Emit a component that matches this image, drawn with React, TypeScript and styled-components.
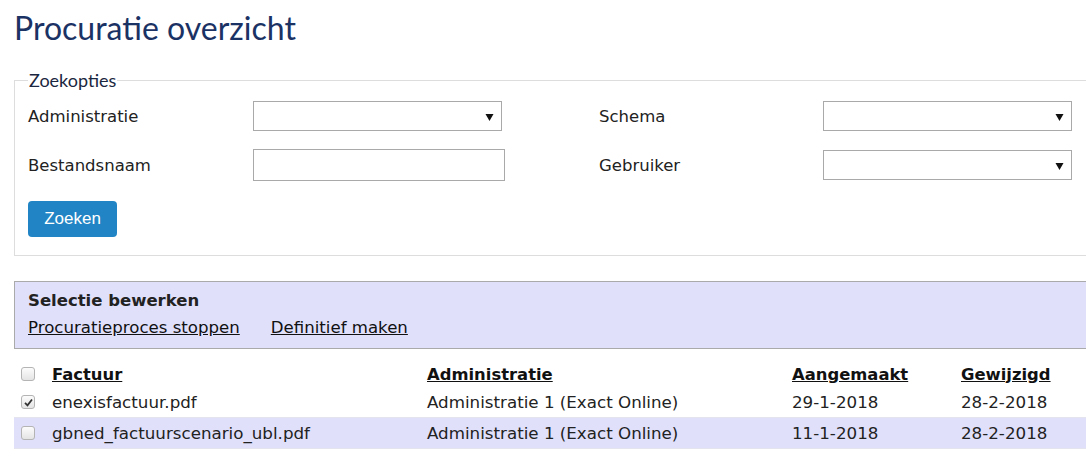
import React from "react";
import styled, { createGlobalStyle } from "styled-components";

const GlobalStyle = createGlobalStyle`
  html, body {
    margin: 0;
    padding: 0;
    background: #fff;
  }
  body {
    font-family: "DejaVu Sans", Verdana, sans-serif;
    color: #222;
  }
`;

const Page = styled.div`
  padding: 0 0 0 14px;
  width: 1100px;
`;

const Title = styled.h1`
  margin: 0;
  padding-top: 9px;
  height: 60px;
  font-family: "Lato", "Open Sans", sans-serif;
  font-weight: 400;
  font-size: 32px;
  line-height: 38px;
  color: #1b3264;
`;

const Fieldset = styled.fieldset`
  margin: 0;
  padding: 4px 12px 18px 13px;
  border: 1px solid #ddd;
  border-right: none;
`;

const Legend = styled.legend`
  padding: 0 1px;
  font-family: "Lato", "Open Sans", sans-serif;
  font-size: 18px;
  color: #1b2740;
`;

const FormGrid = styled.div`
  display: grid;
  grid-template-columns: 225px 346px 224px 250px;
  row-gap: 18px;
  align-items: center;
  margin-top: 6px;
`;

const Label = styled.label`
  font-size: 16.5px;
  color: #222;
`;

const SelectBox = styled.div<{ $width: number }>`
  position: relative;
  width: ${(p) => p.$width}px;
  height: 30px;
  box-sizing: border-box;
  border: 1px solid #a9a9a9;
  background: #fff;
`;

const Arrow = styled.svg`
  position: absolute;
  right: 7px;
  top: 11px;
`;

const TextInput = styled.input`
  width: 252px;
  height: 32px;
  box-sizing: border-box;
  border: 1px solid #a9a9a9;
  margin: 0;
  padding: 0 4px;
  font: inherit;
`;

const SearchButton = styled.button`
  margin-top: 20px;
  width: 89px;
  height: 36px;
  border: none;
  border-radius: 4px;
  background: #2185c5;
  color: #fff;
  font-family: "Liberation Sans", Arial, sans-serif;
  font-size: 17px;
  cursor: pointer;
`;

const SelectionPanel = styled.div`
  margin-top: 25px;
  box-sizing: border-box;
  height: 68px;
  padding: 9px 13px 0;
  background: #e0e0fb;
  border: 1px solid #aaa;
  border-right: none;
`;

const PanelTitle = styled.div`
  font-weight: bold;
  font-size: 16.5px;
  line-height: 20px;
  color: #222;
`;

const PanelLinks = styled.div`
  display: flex;
  gap: 31px;
  margin-top: 7px;
`;

const PanelLink = styled.a`
  font-size: 16.6px;
  line-height: 20px;
  color: #111;
  text-decoration: underline;
  cursor: pointer;
`;

const Table = styled.div`
  margin-top: 12px;
`;

const Row = styled.div<{ $alt?: boolean; $header?: boolean }>`
  display: grid;
  grid-template-columns: 38px 375px 365px 169px 1fr;
  align-items: center;
  height: ${(p) => (p.$header ? 26 : 30)}px;
  background: ${(p) => (p.$alt ? "#e0e0fb" : "transparent")};
  border-bottom: ${(p) => (p.$header ? "none" : "1px solid #e4e4ee")};
  font-size: 16.7px;
`;

const HeaderCell = styled.span`
  font-weight: bold;
  font-size: 16.4px;
  text-decoration: underline;
  color: #111;
`;

const Cell = styled.span`
  color: #222;
  white-space: nowrap;
`;

const CheckCell = styled.span`
  display: flex;
  padding-left: 7px;
`;

const Check = styled.span`
  width: 14px;
  height: 14px;
  box-sizing: border-box;
  border: 1px solid #b4b4b4;
  border-radius: 3px;
  background: linear-gradient(#fcfcfc, #e4e4e4);
  display: flex;
  align-items: center;
  justify-content: center;
`;

const SelectArrow = () => (
  <Arrow width="9" height="9" viewBox="0 0 9 9">
    <path d="M0.5 1 L8.5 1 L4.5 8 Z" fill="#111" />
  </Arrow>
);

const Select = ({ width }: { width: number }) => (
  <SelectBox $width={width}>
    <SelectArrow />
  </SelectBox>
);

const Checkbox = ({ checked }: { checked?: boolean }) => (
  <Check>
    {checked && (
      <svg width="9" height="9" viewBox="0 0 9 9">
        <path d="M1 4.8 L3.5 7.3 L8 1.5" stroke="#333" strokeWidth="1.8" fill="none" />
      </svg>
    )}
  </Check>
);

const rows = [
  {
    file: "enexisfactuur.pdf",
    admin: "Administratie 1 (Exact Online)",
    created: "29-1-2018",
    changed: "28-2-2018",
    checked: true,
  },
  {
    file: "gbned_factuurscenario_ubl.pdf",
    admin: "Administratie 1 (Exact Online)",
    created: "11-1-2018",
    changed: "28-2-2018",
    checked: false,
  },
];

export default function App() {
  return (
    <>
      <GlobalStyle />
      <Page>
        <Title>Procuratie overzicht</Title>
        <Fieldset>
          <Legend>Zoekopties</Legend>
          <FormGrid>
            <Label>Administratie</Label>
            <Select width={249} />
            <Label>Schema</Label>
            <Select width={249} />
            <Label>Bestandsnaam</Label>
            <TextInput type="text" />
            <Label>Gebruiker</Label>
            <Select width={249} />
          </FormGrid>
          <SearchButton>Zoeken</SearchButton>
        </Fieldset>

        <SelectionPanel>
          <PanelTitle>Selectie bewerken</PanelTitle>
          <PanelLinks>
            <PanelLink>Procuratieproces stoppen</PanelLink>
            <PanelLink>Definitief maken</PanelLink>
          </PanelLinks>
        </SelectionPanel>

        <Table>
          <Row $header>
            <CheckCell>
              <Checkbox />
            </CheckCell>
            <HeaderCell>Factuur</HeaderCell>
            <HeaderCell>Administratie</HeaderCell>
            <HeaderCell>Aangemaakt</HeaderCell>
            <HeaderCell>Gewijzigd</HeaderCell>
          </Row>
          {rows.map((r, i) => (
            <Row key={r.file} $alt={i % 2 === 1}>
              <CheckCell>
                <Checkbox checked={r.checked} />
              </CheckCell>
              <Cell>{r.file}</Cell>
              <Cell>{r.admin}</Cell>
              <Cell>{r.created}</Cell>
              <Cell>{r.changed}</Cell>
            </Row>
          ))}
        </Table>
      </Page>
    </>
  );
}
